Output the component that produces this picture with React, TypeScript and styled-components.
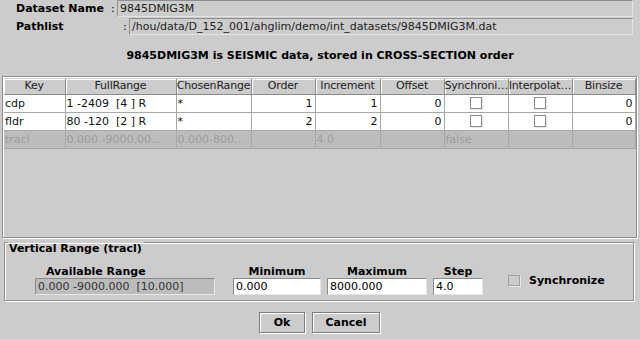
import styled, { createGlobalStyle } from "styled-components";

const GlobalStyle = createGlobalStyle`
  html, body {
    margin: 0;
    padding: 0;
    background: #cccccc;
  }
  * {
    box-sizing: border-box;
  }
`;

const Dialog = styled.div`
  width: 640px;
  height: 339px;
  background: #cccccc;
  font-family: "DejaVu Sans", "Liberation Sans", sans-serif;
  font-size: 11px;
  color: #000;
  display: flex;
  flex-direction: column;
  overflow: hidden;
`;

const InfoRow = styled.div<{ $top: number }>`
  display: flex;
  align-items: center;
  height: 17px;
  margin-top: ${(p) => p.$top}px;
  padding-right: 7px;
`;

const InfoLabel = styled.div<{ $width: number }>`
  width: ${(p) => p.$width}px;
  padding-left: 16px;
  font-weight: bold;
  flex-shrink: 0;
`;

const Colon = styled.div`
  width: 6px;
  flex-shrink: 0;
`;

const ReadOnlyField = styled.div`
  flex: 1;
  height: 100%;
  border: 1px solid #8f8f8f;
  border-right-color: #e4e4e4;
  border-bottom-color: #e4e4e4;
  background: #cccccc;
  padding-left: 2px;
  line-height: 15px;
  white-space: nowrap;
  overflow: hidden;
  color: #222;
`;

const Title = styled.div`
  margin-top: 14px;
  height: 14px;
  line-height: 14px;
  text-align: center;
  font-weight: bold;
`;

const TablePanel = styled.div`
  margin: 13px 3px 0 2px;
  height: 162px;
  flex-shrink: 0;
  border: 1px solid #8e8e8e;
  box-shadow: 1px 1px 0 #ffffff, inset 1px 1px 0 #ffffff;
  padding: 2px 1px 0 1px;
`;

const Grid = styled.table`
  border-collapse: collapse;
  table-layout: fixed;
  width: 631px;
`;

const HeadCell = styled.th<{ $w: number }>`
  width: ${(p) => p.$w}px;
  height: 15px;
  padding: 0;
  font-weight: normal;
  text-align: center;
  letter-spacing: -0.2px;
  background: #cccccc;
  border-right: 1px solid #8a8a8a;
  border-bottom: 1px solid #8a8a8a;
  box-shadow: inset 1px 1px 0 #ffffff;
  white-space: nowrap;
  overflow: hidden;
  line-height: 14px;
  color: #222;
`;

const Row = styled.tr<{ $disabled?: boolean }>`
  height: 18px;
  background: ${(p) => (p.$disabled ? "#bcbcbc" : "#ffffff")};
  color: ${(p) => (p.$disabled ? "#9c9c9c" : "#111")};
`;

const Cell = styled.td<{ $align?: "left" | "right" | "center" }>`
  padding: 0 2px 0 1px;
  border-right: 1px solid #a8a8a8;
  border-bottom: 1px solid #a8a8a8;
  text-align: ${(p) => p.$align ?? "left"};
  white-space: pre;
  overflow: hidden;
  text-overflow: ellipsis;
  line-height: 17px;
`;

const CellBox = styled.span`
  display: inline-block;
  width: 12px;
  height: 12px;
  border: 1px solid #8c8c8c;
  box-shadow: 1px 1px 0 #e8e8e8;
  background: #ffffff;
  vertical-align: middle;
  margin-top: -2px;
`;

const Group = styled.fieldset`
  margin: -2px 6px 0 4px;
  border: 1px solid #8e8e8e;
  box-shadow: 1px 1px 0 #ffffff, inset 1px 1px 0 #ffffff;
  padding: 0 0 5px 0;
  min-width: 0;
`;

const Legend = styled.legend`
  margin-left: 3px;
  padding: 0 2px 0 1px;
  font-weight: bold;
  line-height: 13px;
  transform: translateY(6px);
`;

const RangeRow = styled.div`
  display: flex;
  align-items: flex-end;
  margin-top: 16px;
  padding-left: 30px;
  gap: 6px;
`;

const Column = styled.div<{ $width: number; $gap?: number }>`
  width: ${(p) => p.$width}px;
  margin-right: ${(p) => p.$gap ?? 0}px;
  display: flex;
  flex-direction: column;
  align-items: center;
`;

const ColumnLabel = styled.div<{ $indent?: number }>`
  font-weight: bold;
  line-height: 13px;
  align-self: ${(p) => (p.$indent !== undefined ? "flex-start" : "center")};
  padding-left: ${(p) => p.$indent ?? 0}px;
`;

const InputBox = styled.div<{ $readOnly?: boolean }>`
  width: 100%;
  height: 17px;
  border: 1px solid #8a8a8a;
  border-right-color: #e6e6e6;
  border-bottom-color: #e6e6e6;
  background: ${(p) => (p.$readOnly ? "#bcbcbc" : "#ffffff")};
  color: ${(p) => (p.$readOnly ? "#333" : "#000")};
  padding-left: 2px;
  line-height: 15px;
  white-space: pre;
`;

const SyncOption = styled.div`
  display: flex;
  align-items: center;
  margin-left: 19px;
  margin-bottom: 8px;
  gap: 9px;
  font-weight: bold;
  line-height: 13px;
`;

const CheckBox = styled.span`
  width: 12px;
  height: 11px;
  border: 1px solid #a0a0a0;
  box-shadow: 1px 1px 0 #e8e8e8;
  background: #cccccc;
`;

const Buttons = styled.div`
  margin-top: 11px;
  display: flex;
  justify-content: center;
  gap: 7px;
  padding-right: 1px;
`;

const Button = styled.button<{ $width: number }>`
  width: ${(p) => p.$width}px;
  height: 21px;
  font-family: inherit;
  font-size: 11px;
  font-weight: bold;
  color: #000;
  background: #cccccc;
  border: 1px solid #7e7e7e;
  box-shadow: inset 1px 1px 0 #ffffff, 1px 1px 0 #ffffff;
  padding: 0;
`;

const columns = [
  { name: "Key", w: 61 },
  { name: "FullRange", w: 111 },
  { name: "ChosenRange", w: 75 },
  { name: "Order", w: 64 },
  { name: "Increment", w: 65 },
  { name: "Offset", w: 64 },
  { name: "Synchroni…", w: 64 },
  { name: "Interpolat…", w: 64 },
  { name: "Binsize", w: 63 },
];

const keys = [
  { key: "cdp", full: "1 -2409  [4 ] R", chosen: "*", order: 1, inc: 1 },
  { key: "fldr", full: "80 -120  [2 ] R", chosen: "*", order: 2, inc: 2 },
];

export default function App() {
  return (
    <>
      <GlobalStyle />
      <Dialog>
        <InfoRow $top={0}>
          <InfoLabel $width={111}>Dataset Name</InfoLabel>
          <Colon>:</Colon>
          <ReadOnlyField>9845DMIG3M</ReadOnlyField>
        </InfoRow>
        <InfoRow $top={1}>
          <InfoLabel $width={123}>Pathlist</InfoLabel>
          <Colon>:</Colon>
          <ReadOnlyField>/hou/data/D_152_001/ahglim/demo/int_datasets/9845DMIG3M.dat</ReadOnlyField>
        </InfoRow>

        <Title>9845DMIG3M is SEISMIC data, stored in CROSS-SECTION order</Title>

        <TablePanel>
          <Grid>
            <thead>
              <tr>
                {columns.map((c) => (
                  <HeadCell key={c.name} $w={c.w}>
                    {c.name}
                  </HeadCell>
                ))}
              </tr>
            </thead>
            <tbody>
              {keys.map((k) => (
                <Row key={k.key}>
                  <Cell>{k.key}</Cell>
                  <Cell>{k.full}</Cell>
                  <Cell>{k.chosen}</Cell>
                  <Cell $align="right">{k.order}</Cell>
                  <Cell $align="right">{k.inc}</Cell>
                  <Cell $align="right">0</Cell>
                  <Cell $align="center">
                    <CellBox />
                  </Cell>
                  <Cell $align="center">
                    <CellBox />
                  </Cell>
                  <Cell $align="right">0</Cell>
                </Row>
              ))}
              <Row $disabled>
                <Cell>tracl</Cell>
                <Cell>0.000 -9000.00...</Cell>
                <Cell>0.000-800...</Cell>
                <Cell />
                <Cell>4.0</Cell>
                <Cell />
                <Cell>false</Cell>
                <Cell />
                <Cell />
              </Row>
            </tbody>
          </Grid>
        </TablePanel>

        <Group>
          <Legend>Vertical Range (tracl)</Legend>
          <RangeRow>
            <Column $width={180} $gap={12}>
              <ColumnLabel $indent={11}>Available Range</ColumnLabel>
              <InputBox $readOnly>0.000 -9000.000  [10.000]</InputBox>
            </Column>
            <Column $width={88}>
              <ColumnLabel>Minimum</ColumnLabel>
              <InputBox>0.000</InputBox>
            </Column>
            <Column $width={100}>
              <ColumnLabel>Maximum</ColumnLabel>
              <InputBox>8000.000</InputBox>
            </Column>
            <Column $width={50}>
              <ColumnLabel>Step</ColumnLabel>
              <InputBox>4.0</InputBox>
            </Column>
            <SyncOption>
              <CheckBox />
              Synchronize
            </SyncOption>
          </RangeRow>
        </Group>

        <Buttons>
          <Button $width={46}>Ok</Button>
          <Button $width={68}>Cancel</Button>
        </Buttons>
      </Dialog>
    </>
  );
}
